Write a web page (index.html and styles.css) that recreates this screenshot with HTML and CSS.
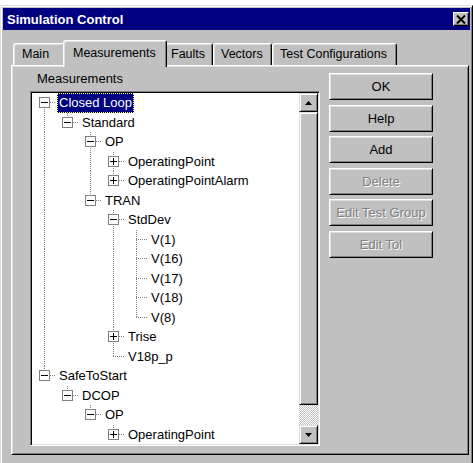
FILE: index.html
```html
<!DOCTYPE html>
<html>
<head>
<meta charset="utf-8">
<title>Simulation Control</title>
<link rel="stylesheet" href="styles.css">
</head>
<body>
<div class="window">
  <div class="titlebar">
    <span class="title">Simulation Control</span>
    <span class="close"><svg width="10" height="9" viewBox="0 0 10 9"><path d="M1 0.5 L9 8.5 M9 0.5 L1 8.5" stroke="#000" stroke-width="2"/></svg></span>
  </div>

  <div class="tabs">
    <div class="tab t-main">Main</div>
    <div class="tab t-meas active">Measurements</div>
    <div class="tab t-faults">Faults</div>
    <div class="tab t-vectors">Vectors</div>
    <div class="tab t-tests">Test Configurations</div>
  </div>

  <div class="panel">
    <div class="left">
      <div class="caption">Measurements</div>
      <div class="treebox">
        <div class="tree">
          <div class="row"><i class="j first"><b class="box minus"></b></i><span class="label sel">Closed Loop</span></div>
          <div class="row"><i class="g v"></i><i class="j end"><b class="box minus"></b></i><span class="label">Standard</span></div>
          <div class="row"><i class="g v"></i><i class="g"></i><i class="j tee"><b class="box minus"></b></i><span class="label">OP</span></div>
          <div class="row"><i class="g v"></i><i class="g"></i><i class="g v"></i><i class="j tee"><b class="box plus"></b></i><span class="label">OperatingPoint</span></div>
          <div class="row"><i class="g v"></i><i class="g"></i><i class="g v"></i><i class="j end"><b class="box plus"></b></i><span class="label">OperatingPointAlarm</span></div>
          <div class="row"><i class="g v"></i><i class="g"></i><i class="j end"><b class="box minus"></b></i><span class="label">TRAN</span></div>
          <div class="row"><i class="g v"></i><i class="g"></i><i class="g"></i><i class="j tee"><b class="box minus"></b></i><span class="label">StdDev</span></div>
          <div class="row"><i class="g v"></i><i class="g"></i><i class="g"></i><i class="g v"></i><i class="j tee"></i><span class="label">V(1)</span></div>
          <div class="row"><i class="g v"></i><i class="g"></i><i class="g"></i><i class="g v"></i><i class="j tee"></i><span class="label">V(16)</span></div>
          <div class="row"><i class="g v"></i><i class="g"></i><i class="g"></i><i class="g v"></i><i class="j tee"></i><span class="label">V(17)</span></div>
          <div class="row"><i class="g v"></i><i class="g"></i><i class="g"></i><i class="g v"></i><i class="j tee"></i><span class="label">V(18)</span></div>
          <div class="row"><i class="g v"></i><i class="g"></i><i class="g"></i><i class="g v"></i><i class="j end"></i><span class="label">V(8)</span></div>
          <div class="row"><i class="g v"></i><i class="g"></i><i class="g"></i><i class="j tee"><b class="box plus"></b></i><span class="label">Trise</span></div>
          <div class="row"><i class="g v"></i><i class="g"></i><i class="g"></i><i class="j end"></i><span class="label">V18p_p</span></div>
          <div class="row"><i class="j end"><b class="box minus"></b></i><span class="label">SafeToStart</span></div>
          <div class="row"><i class="g"></i><i class="j end"><b class="box minus"></b></i><span class="label">DCOP</span></div>
          <div class="row"><i class="g"></i><i class="g"></i><i class="j end"><b class="box minus"></b></i><span class="label">OP</span></div>
          <div class="row"><i class="g"></i><i class="g"></i><i class="g"></i><i class="j end"><b class="box plus"></b></i><span class="label">OperatingPoint</span></div>
        </div>
        <div class="vscroll">
          <span class="sb-btn"><svg width="7" height="4" viewBox="0 0 7 4"><polygon points="3.5,0 7,4 0,4" fill="#000"/></svg></span>
          <span class="thumb"></span>
          <span class="track"></span>
          <span class="sb-btn"><svg width="7" height="4" viewBox="0 0 7 4"><polygon points="0,0 7,0 3.5,4" fill="#000"/></svg></span>
        </div>
      </div>
    </div>

    <div class="buttons">
      <div class="btn">OK</div>
      <div class="btn">Help</div>
      <div class="btn">Add</div>
      <div class="btn disabled">Delete</div>
      <div class="btn disabled">Edit Test Group</div>
      <div class="btn disabled">Edit Tol</div>
    </div>
  </div>
</div>
</body>
</html>
```

FILE: styles.css
```css
html, body {
  margin: 0;
  padding: 0;
  background: #ffffff;
  overflow: hidden;
}

body {
  font-family: "Liberation Sans", Arial, sans-serif;
  font-size: 13px;
  color: #000;
}

/* shared 3D bevels */
.window,
.panel,
.btn,
.sb-btn,
.thumb,
.close {
  background-color: #c0c0c0;
}

.window {
  margin-top: 5px;
  width: 473px;
  height: 470px;
  box-sizing: border-box;
  border: 1px solid;
  border-color: #dfdfdf #000 #000 #dfdfdf;
  box-shadow: inset 1px 1px #fff, inset -1px -1px #808080;
  padding: 2px;
}

.titlebar {
  height: 22px;
  background: #000080;
  color: #fff;
  display: flex;
  align-items: center;
  justify-content: space-between;
  padding: 0 1px 0 4px;
}

.title {
  font-weight: bold;
  font-size: 13px;
}

.close {
  width: 16px;
  height: 14px;
  box-sizing: border-box;
  border: 1px solid;
  border-color: #fff #000 #000 #fff;
  box-shadow: inset -1px -1px #808080;
  display: flex;
  align-items: center;
  justify-content: center;
}

/* tab strip */
.tabs {
  display: flex;
  align-items: flex-end;
  height: 25px;
  margin: 10px 0 0 10px;
}

.tab {
  height: 22px;
  box-sizing: border-box;
  border: 1px solid;
  border-bottom: none;
  border-color: #fff #000 transparent #fff;
  border-radius: 3px 3px 0 0;
  box-shadow: inset 1px 1px #dfdfdf, inset -1px 0 #808080;
  background: #c0c0c0;
  font-size: 12.5px;
  line-height: 21px;
  white-space: nowrap;
}

.tab.active {
  position: relative;
  z-index: 1;
  height: 27px;
  margin: 0 -2px -2px;
  padding-top: 1px;
  line-height: 22px;
}

.t-main { width: 52px; padding-left: 8px; }
.t-meas { width: 104px; padding-left: 9px; }
.t-faults { width: 48px; padding-left: 5px; }
.t-vectors { width: 59px; padding-left: 7px; }
.t-tests { width: 125px; padding-left: 7px; }

/* page body */
.panel {
  margin-left: 8px;
  width: 458px;
  height: 390px;
  box-sizing: border-box;
  border: 1px solid;
  border-color: #fff #000 #000 #fff;
  box-shadow: inset 1px 1px #dfdfdf, inset -1px -1px #808080;
  display: flex;
}

.left {
  margin-left: 18px;
  padding-top: 3px;
}

.caption {
  height: 20px;
  line-height: 20px;
  padding-left: 7px;
  margin-bottom: 2px;
}

.treebox {
  width: 290px;
  height: 355px;
  box-sizing: border-box;
  border: 1px solid;
  border-color: #808080 #fff #fff #808080;
  box-shadow: inset 1px 1px #000, inset -1px -1px #dfdfdf;
  padding: 1px;
  display: flex;
  background: #fff;
}

.tree {
  flex: 1;
  overflow: hidden;
  background: #fff;
}

.row {
  display: flex;
  height: 19.5px;
  padding-left: 1px;
}

.g,
.j {
  flex: 0 0 23px;
  height: 100%;
}

.g.v {
  background: repeating-linear-gradient(#808080 0 1px, transparent 1px 2px) 11px 0 / 1px 100% no-repeat;
}

.j {
  display: flex;
  align-items: center;
  box-sizing: border-box;
  padding-left: 6px;
  background-repeat: no-repeat;
  background-image:
    repeating-linear-gradient(#808080 0 1px, transparent 1px 2px),
    repeating-linear-gradient(to right, #808080 0 1px, transparent 1px 2px);
  background-size: 1px 100%, 12px 1px;
  background-position: 11px 0, 11px 50%;
}

.j.end {
  background-size: 1px 50%, 12px 1px;
}

.j.first {
  background-size: 1px 50%, 12px 1px;
  background-position: 11px 100%, 11px 50%;
}

.box {
  width: 11px;
  height: 11px;
  box-sizing: border-box;
  border: 1px solid #808080;
  background: #fff;
}

.box.minus {
  background: linear-gradient(#000, #000) center / 7px 1px no-repeat, #fff;
}

.box.plus {
  background:
    linear-gradient(#000, #000) center / 7px 1px no-repeat,
    linear-gradient(#000, #000) center / 1px 7px no-repeat,
    #fff;
}

.label {
  margin-left: 1px;
  padding: 0 2px;
  line-height: 19.5px;
  white-space: nowrap;
}

.label.sel {
  background: #000080;
  color: #fff;
  outline: 1px dotted #ffff60;
  outline-offset: -1px;
}

/* scroll bar */
.vscroll {
  flex: 0 0 19px;
  display: flex;
  flex-direction: column;
}

.sb-btn,
.thumb,
.btn {
  box-sizing: border-box;
  border: 1px solid;
  border-color: #dfdfdf #000 #000 #dfdfdf;
  box-shadow: inset 1px 1px #fff, inset -1px -1px #808080;
}

.sb-btn {
  height: 19px;
  display: flex;
  align-items: center;
  justify-content: center;
}

.thumb {
  height: 293px;
}

.track {
  flex: 1;
  background: repeating-conic-gradient(#c0c0c0 0 25%, #fff 0 50%) 0 0 / 2px 2px;
}

/* command buttons */
.buttons {
  margin-left: 9px;
  padding-top: 7px;
  display: flex;
  flex-direction: column;
  gap: 4.6px;
}

.btn {
  width: 104px;
  height: 27px;
  display: flex;
  align-items: center;
  justify-content: center;
  border-color: #fff #000 #000 #fff;
  box-shadow: inset 1px 1px #dfdfdf, inset -1px -1px #808080;
  white-space: nowrap;
}

.btn.disabled {
  color: #808080;
  text-shadow: 1px 1px #fff;
}
```
